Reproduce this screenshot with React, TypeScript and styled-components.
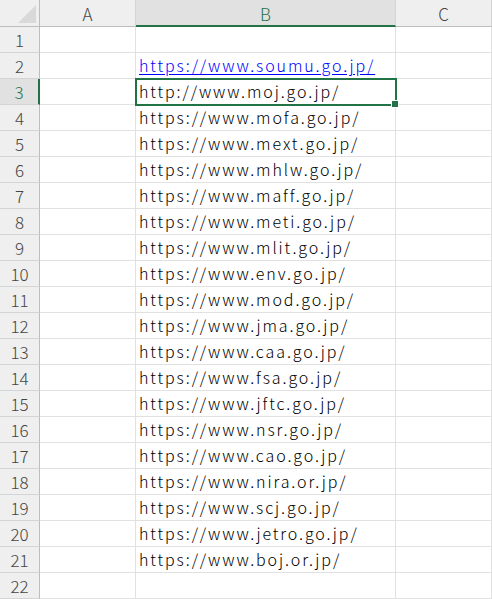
import React from "react";
import styled, { createGlobalStyle } from "styled-components";

const Global = createGlobalStyle`
  html, body {
    margin: 0;
    padding: 0;
    background: #ffffff;
  }
  body {
    font-family: "Noto Sans CJK JP", "Noto Sans", sans-serif;
  }
`;

const Sheet = styled.div`
  display: grid;
  grid-template-columns: 40px 96px 260px 96px;
  grid-template-rows: 27px repeat(22, 26px);
  width: 492px;
  overflow: hidden;
`;

const Corner = styled.div`
  position: relative;
  background: #efefef;
  border-right: 1px solid #bdbdbd;
  border-bottom: 1px solid #bdbdbd;
  box-sizing: border-box;
  &::after {
    content: "";
    position: absolute;
    right: 3px;
    bottom: 3px;
    width: 0;
    height: 0;
    border-left: 18px solid transparent;
    border-bottom: 18px solid #d9d9d9;
  }
`;

const ColHead = styled.div<{ $active?: boolean }>`
  display: flex;
  align-items: center;
  justify-content: center;
  box-sizing: border-box;
  background: ${(p) => (p.$active ? "#e1e1e1" : "#efefef")};
  color: ${(p) => (p.$active ? "#217346" : "#444")};
  border-right: 1px solid #d4d4d4;
  border-bottom: ${(p) => (p.$active ? "2px solid #217346" : "1px solid #bdbdbd")};
  font-size: 17px;
  font-weight: 300;
  padding-top: 1px;
`;

const RowHead = styled.div<{ $active?: boolean }>`
  display: flex;
  align-items: center;
  justify-content: center;
  box-sizing: border-box;
  background: ${(p) => (p.$active ? "#e1e1e1" : "#efefef")};
  color: ${(p) => (p.$active ? "#217346" : "#444")};
  border-right: ${(p) => (p.$active ? "2px solid #217346" : "1px solid #bdbdbd")};
  border-bottom: 1px solid #d4d4d4;
  font-size: 17px;
  font-weight: 300;
`;

const Cell = styled.div<{ $selected?: boolean }>`
  position: relative;
  display: flex;
  align-items: flex-end;
  box-sizing: border-box;
  border-right: 1px solid #e1e1e1;
  border-bottom: 1px solid #e1e1e1;
  padding: 0 0 1px 3px;
  font-size: 16px;
  font-weight: 300;
  letter-spacing: 1.9px;
  color: #000;
  white-space: nowrap;
  ${(p) =>
    p.$selected &&
    `
    outline: 2px solid #217346;
    outline-offset: -1px;
    z-index: 1;
    &::after {
      content: "";
      position: absolute;
      right: -4px;
      bottom: -4px;
      width: 6px;
      height: 6px;
      background: #217346;
      border: 1px solid #fff;
    }
  `}
`;

const Link = styled.span`
  color: #0000ff;
  text-decoration: underline;
  text-underline-offset: 2px;
`;

const urls = [
  "",
  "https://www.soumu.go.jp/",
  "http://www.moj.go.jp/",
  "https://www.mofa.go.jp/",
  "https://www.mext.go.jp/",
  "https://www.mhlw.go.jp/",
  "https://www.maff.go.jp/",
  "https://www.meti.go.jp/",
  "https://www.mlit.go.jp/",
  "https://www.env.go.jp/",
  "https://www.mod.go.jp/",
  "https://www.jma.go.jp/",
  "https://www.caa.go.jp/",
  "https://www.fsa.go.jp/",
  "https://www.jftc.go.jp/",
  "https://www.nsr.go.jp/",
  "https://www.cao.go.jp/",
  "https://www.nira.or.jp/",
  "https://www.scj.go.jp/",
  "https://www.jetro.go.jp/",
  "https://www.boj.or.jp/",
  "",
];

export default function App() {
  return (
    <>
      <Global />
      <Sheet>
        <Corner />
        <ColHead>A</ColHead>
        <ColHead $active>B</ColHead>
        <ColHead>C</ColHead>
        {urls.map((url, i) => (
          <React.Fragment key={i}>
            <RowHead $active={i === 2}>{i + 1}</RowHead>
            <Cell />
            <Cell $selected={i === 2}>
              {i === 1 ? <Link>{url}</Link> : url}
            </Cell>
            <Cell />
          </React.Fragment>
        ))}
      </Sheet>
    </>
  );
}
